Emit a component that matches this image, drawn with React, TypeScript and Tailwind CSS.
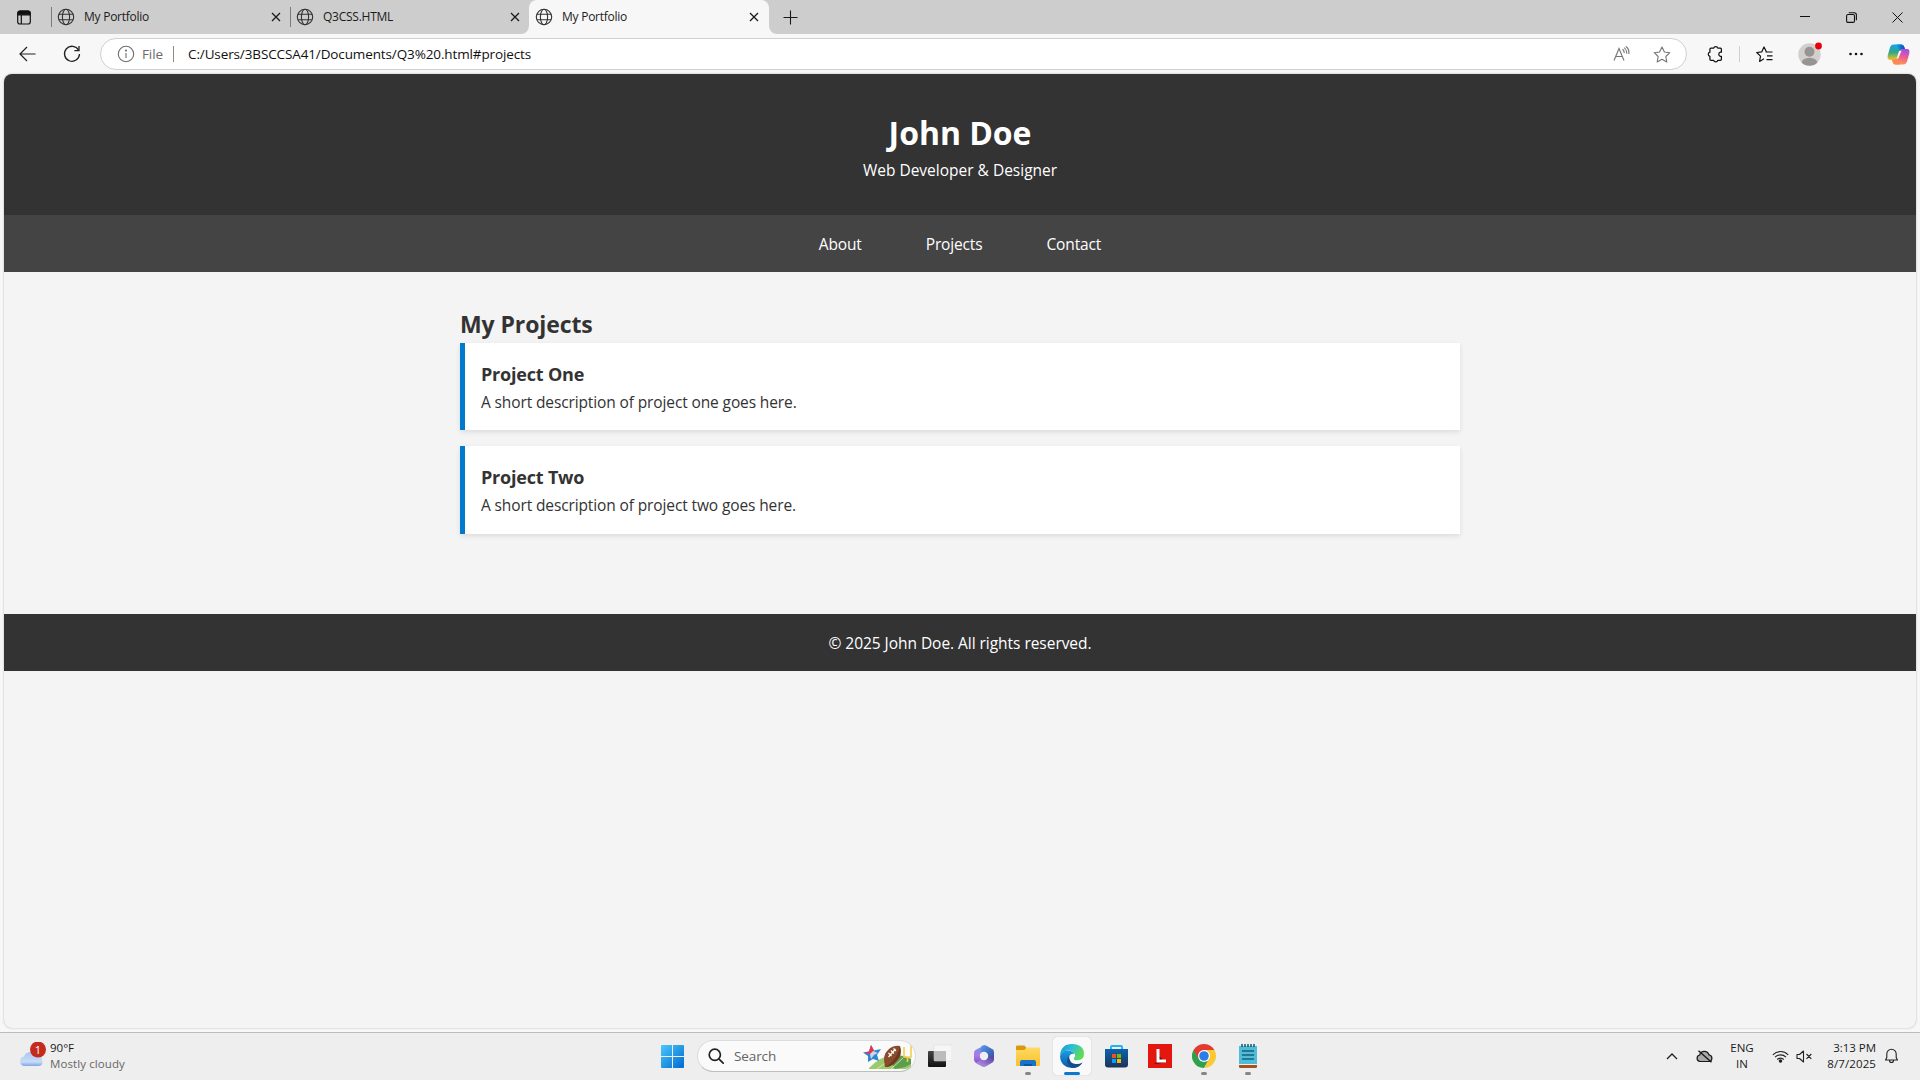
import type { ReactNode } from "react";

function Globe() {
  return (
    <svg width="18" height="18" viewBox="0 0 18 18" fill="none" stroke="#333" strokeWidth="1.1">
      <circle cx="9" cy="9" r="7.7" />
      <ellipse cx="9" cy="9" rx="3.6" ry="7.7" />
      <path d="M2 6.2h14M2 11.8h14" />
    </svg>
  );
}

function Cross() {
  return (
    <svg width="10" height="10" viewBox="0 0 10 10" fill="none" stroke="#1a1a1a" strokeWidth="1.3">
      <path d="M1 1l8 8M9 1l-8 8" />
    </svg>
  );
}

function Tab({ title }: { title: string }) {
  return (
    <>
      <Globe />
      <span className="ml-[9px] flex-1 whitespace-nowrap text-[12px] leading-[16px] tracking-[-0.25px] text-[#1b1b1b]">{title}</span>
      <Cross />
    </>
  );
}

function TabBar() {
  return (
    <div className="flex h-[34px] bg-[#cdcdcd]">
      <div className="flex w-[51px] items-center pl-[17px]">
        <svg width="14" height="15" viewBox="0 0 14 15" fill="none" stroke="#111" strokeWidth="1.2">
          <rect x=".7" y="1" width="12.6" height="13" rx="2.2" />
          <path d="M1 3.2V3a2 2 0 012-2h8a2 2 0 012 2v1.8H1z" fill="#111" />
          <path d="M4.3 5v9" />
        </svg>
      </div>
      <div className="flex w-[239px] items-center pr-[9px]">
        <div className="mr-[5px] h-[20px] w-px bg-[#7c7c7c]" />
        <Tab title="My Portfolio" />
      </div>
      <div className="flex w-[239px] items-center pr-[9px]">
        <div className="mr-[5px] h-[20px] w-px bg-[#7c7c7c]" />
        <Tab title="Q3CSS.HTML" />
      </div>
      <div className="relative flex w-[240px] items-center rounded-t-[8px] bg-[#f7f7f7] pl-[6px] pr-[10px]">
        <svg className="absolute -left-[8px] bottom-0" width="8" height="8"><path d="M8 0v8H0a8 8 0 008-8z" fill="#f7f7f7" /></svg>
        <svg className="absolute -right-[8px] bottom-0" width="8" height="8"><path d="M0 0v8h8a8 8 0 01-8-8z" fill="#f7f7f7" /></svg>
        <Tab title="My Portfolio" />
      </div>
      <div className="flex items-center pl-[14px]">
        <svg width="15" height="15" viewBox="0 0 15 15" stroke="#1a1a1a" strokeWidth="1.1"><path d="M7.5 .5v14M.5 7.5h14" /></svg>
      </div>
      <div className="ml-auto flex items-center">
        <div className="flex w-[46px] justify-center">
          <svg width="10" height="10" stroke="#111" strokeWidth="1"><path d="M0 4.5h10" /></svg>
        </div>
        <div className="flex w-[46px] justify-center">
          <svg width="11" height="11" viewBox="0 0 11 11" fill="none" stroke="#111" strokeWidth="1.1">
            <rect x=".6" y="2.5" width="7.9" height="7.9" rx="1.4" />
            <path d="M2.8.7h5.4a2.2 2.2 0 012.2 2.2v5.4" />
          </svg>
        </div>
        <div className="flex w-[46px] justify-center">
          <svg width="11" height="11" viewBox="0 0 11 11" stroke="#111" strokeWidth="1"><path d="M.5.5l10 10M10.5.5l-10 10" /></svg>
        </div>
      </div>
    </div>
  );
}

function Slot({ w, children }: { w: string; children: ReactNode }) {
  return <div className={`flex shrink-0 items-center justify-center ${w}`}>{children}</div>;
}

function Toolbar() {
  return (
    <div className="flex h-[40px] items-center bg-[#f7f7f7]">
      <div className="flex w-[100px] items-center pl-[19px]">
        <svg width="17" height="16" viewBox="0 0 17 16" fill="none" stroke="#222" strokeWidth="1.2"><path d="M16.5 8H1.2M8 1L1 8l7 7" /></svg>
        <svg className="ml-[27px]" width="18" height="18" viewBox="0 0 18 18" fill="none" stroke="#222" strokeWidth="1.3">
          <path d="M15.6 5.2A7.5 7.5 0 1016.5 9" />
          <path d="M16 1v4.6h-4.6" />
        </svg>
      </div>
      <div className="flex h-[32px] w-[1587px] items-center rounded-full border border-[#d0d0d0] bg-white pl-[16px]">
        <svg width="18" height="18" viewBox="0 0 18 18" fill="none" stroke="#6f6f6f" strokeWidth="1.1">
          <circle cx="9" cy="9" r="7.7" />
          <path d="M9 8v5" />
          <circle cx="9" cy="5.6" r=".5" fill="#6f6f6f" />
        </svg>
        <span className="ml-[7px] w-[31px] text-[13.5px] leading-[18px] tracking-[-0.1px] text-[#6b6b6b]">File</span>
        <div className="h-[16px] w-px bg-[#8a8a8a]" />
        <span className="ml-[14px] flex-1 whitespace-nowrap text-[13.5px] leading-[18px] tracking-[-0.12px] text-[#111]">
          C:/Users/3BSCCSA41/Documents/Q3%20.html#projects
        </span>
        <svg width="17" height="16" viewBox="0 0 17 16" fill="none" stroke="#757575" strokeWidth="1.1">
          <path d="M1 14.5L6 2.500l5 12M2.800 10.500h6.400M9.500 3.200q2 1.400 1.600 4M11 1.600q3.200 2 2.600 6M12.800.400q3.800 2.600 3 7.600" />
        </svg>
        <svg className="ml-[23px] mr-[15px]" width="18" height="17" viewBox="0 0 18 17" fill="none" stroke="#757575" strokeWidth="1.1" strokeLinejoin="round">
          <path d="M9 1l2.400 5 5.400.7-4 3.800 1 5.500L9 13.300 4.200 16l1-5.500-4-3.800L6.600 6z" />
        </svg>
      </div>
      <Slot w="w-[56px]">
        <svg width="17" height="18" viewBox="0 0 17 18" fill="none" stroke="#111" strokeWidth="1.25" strokeLinejoin="round">
          <path d="M3.900 3.200h2.800a2.100 2.100 0 014.100 0h2.600q1 0 1 1v3h-1a2.100 2.100 0 000 4.100h1v3q0 1-1 1h-2.600a2.100 2.100 0 01-4.100 0H3.900q-1 0-1-1v-3a2.100 2.100 0 010-4.100v-3q0-1 1-1z" />
        </svg>
      </Slot>
      <div className="ml-[-4px] h-[16px] w-px bg-[#cfcfcf]" />
      <Slot w="w-[48px]">
        <svg width="17" height="17" viewBox="0 0 17 17" fill="none" stroke="#111" strokeWidth="1.2" strokeLinejoin="round">
          <path d="M10.500 6L8 1 5.800 5.800.700 6.500l3.800 3.600-.9 5.300L8 12.800M9.500 6h7M11 9.800h5.500M10.500 13.600h6" />
        </svg>
      </Slot>
      <Slot w="w-[43px]">
        <svg className="mt-[-1px]" width="24" height="24" viewBox="0 0 24 24">
          <clipPath id="av"><circle cx="11.500" cy="12.500" r="11.200" /></clipPath>
          <circle cx="11.500" cy="12.500" r="11.200" fill="#d2d0ce" />
          <circle cx="11.500" cy="9.700" r="5" fill="#979593" />
          <ellipse cx="11.500" cy="21" rx="8" ry="5.200" fill="#979593" clipPath="url(#av)" />
          <circle cx="20.500" cy="4" r="3.400" fill="#e8000b" />
        </svg>
      </Slot>
      <Slot w="w-[50px]">
        <svg width="14" height="4" viewBox="0 0 14 4" fill="#111"><circle cx="1.500" cy="2" r="1.300" /><circle cx="7" cy="2" r="1.300" /><circle cx="12.500" cy="2" r="1.300" /></svg>
      </Slot>
      <Slot w="w-[34px]"><Copilot /></Slot>
    </div>
  );
}

function Copilot() {
  return (
    <svg width="23" height="21" viewBox="0 0 23 21">
      <defs>
        <linearGradient id="cpa" x1="0" y1="0" x2="0" y2="1"><stop offset="0" stopColor="#16a5e8" /><stop offset=".5" stopColor="#2fa58c" /><stop offset="1" stopColor="#f5c61d" /></linearGradient>
        <linearGradient id="cpb" x1=".6" y1="0" x2=".4" y2="1"><stop offset="0" stopColor="#a34ee8" /><stop offset=".5" stopColor="#ee5e8d" /><stop offset="1" stopColor="#ff9a55" /></linearGradient>
        <linearGradient id="cpc" x1="0" y1="0" x2="1" y2="0"><stop offset="0" stopColor="#0ba0e8" /><stop offset="1" stopColor="#1347b8" /></linearGradient>
      </defs>
      <path d="M6.500.500h8q2 0 2.800 2.600l.8 2.400h-3q-2 0-2.700 2.500L10.600 14q-.7 1.900-2.600 1.900H3Q0 15.900.700 11.500L3 3.500Q4 .500 6.500.500z" fill="url(#cpa)" />
      <path d="M16.500 20.500h-8q-2 0-2.800-2.600L5 15.500h3q2 0 2.700-2.500l1.700-6q.7-1.900 2.600-1.900h5q3 0 2.300 4.400l-2.300 8q-1 3-3.500 3z" fill="url(#cpb)" />
      <path d="M9.500.500h5q2 0 2.800 2.600l.7 2h-3q-2 0-2.800 2.400Q12 3 9.500.500z" fill="url(#cpc)" />
      <path d="M13.500 20.500h-5q-2 0-2.800-2.600l-.7-2h3q2 0 2.800-2.400Q11 18 13.500 20.500z" fill="#fb8a4c" />
      <path d="M12.300 6.800h2.200L11.300 14.500H9.100q.9-.5 1.300-1.900l1.100-4z" fill="#f7f7f7" />
    </svg>
  );
}

function Project({ title, text, height }: { title: string; text: string; height: string }) {
  return (
    <article className={`border-l-[5px] border-[#007acc] bg-white px-4 pt-[17px] shadow-[0_2px_5px_rgba(0,0,0,0.1)] ${height}`}>
      <h3 className="text-[18px] font-bold leading-[28px] tracking-[-0.2px]">{title}</h3>
      <p className="text-[15.5px] leading-[28px] tracking-[-0.12px]">{text}</p>
    </article>
  );
}

function Page() {
  return (
    <div className="mx-[4px] h-[954px] overflow-hidden rounded-[8px] bg-[#f4f4f4] text-[#333] shadow-[0_0_2px_rgba(0,0,0,0.3)]">
      <header className="h-[141px] bg-[#333] pt-[34px] text-center text-white">
        <h1 className="text-[32px] font-bold leading-[50px] tracking-[-0.05px]">John Doe</h1>
        <p className="text-[15.5px] leading-[25px]">Web Developer &amp; Designer</p>
      </header>
      <nav className="flex h-[57px] items-center justify-center gap-[64px] bg-[#444] pt-[2px] text-[15.5px] leading-[25px] tracking-[-0.15px] text-white">
        <span>About</span>
        <span>Projects</span>
        <span>Contact</span>
      </nav>
      <main className="mx-auto h-[342px] w-[1000px] pt-[33px]">
        <h2 className="text-[23px] font-bold leading-[38px] tracking-[-0.1px]">My Projects</h2>
        <div className="flex flex-col gap-4">
          <Project title="Project One" text="A short description of project one goes here." height="h-[87px]" />
          <Project title="Project Two" text="A short description of project two goes here." height="h-[88px]" />
        </div>
      </main>
      <footer className="flex h-[57px] items-center justify-center bg-[#333] pt-[2px] text-[15.5px] tracking-[-0.04px] text-white">
        © 2025 John Doe. All rights reserved.
      </footer>
    </div>
  );
}

function TaskIcon({ children, active, dot }: { children: ReactNode; active?: boolean; dot?: boolean }) {
  return (
    <div className={`relative mx-[3px] flex h-[38px] w-[38px] items-center justify-center rounded-[4px] ${active ? "bg-[#f9f9f9] shadow-[0_0_1px_rgba(0,0,0,0.3)]" : ""}`}>
      {children}
      {active && <div className="absolute bottom-0 h-[3px] w-[16px] rounded-full bg-[#0a78d4]" />}
      {dot && <div className="absolute bottom-0 h-[3px] w-[6px] rounded-full bg-[#868686]" />}
    </div>
  );
}

function SearchArt() {
  return (
    <svg width="50" height="28" viewBox="0 0 50 28">
      <path d="M6 26q12-12 24-13 12 0 18 4v7q-2 3-6 3H6z" fill="#9cc96a" />
      <path d="M24 14q10-3 24 3v5l-6 3-10 2z" fill="#5d9d4c" />
      <path d="M14 27l18-13M28 27l12-11" stroke="#dfeecb" strokeWidth=".8" />
      <path d="M8 3l3 5.500 7-1.500-4 6 2 6-6-2-5 3v-6L0 10.500l6-1z" fill="#2f86cf" />
      <path d="M8 3l3 5.500-1 4-9-2 5-1z" fill="#e8344a" />
      <path d="M10 9l5 2-4 2-3 4-1-5z" fill="#c9d6ea" />
      <path d="M22 25Q19 13 25 8q5-5 12-4 3 9-3 15-5 6-12 6z" fill="#8a4a2c" />
      <path d="M22 25q4-1 8-6 5-6 7-14 2 8-4 14-5 6-11 6z" fill="#6d3420" />
      <path d="M25.500 15l7-8M25.500 11l3 3M28 8.500l3 3M30.500 6.500l2.500 2.500" stroke="#fff" strokeWidth="1.200" />
      <path d="M41 5v10h7V4M44.500 15v5" fill="none" stroke="#f3cf4f" strokeWidth="1.600" />
    </svg>
  );
}

function Taskbar() {
  return (
    <div className="flex h-[48px] items-center border-t border-[#bcbcbc] bg-[#eee] pb-px">
      <div className="flex w-[650px] items-center pl-[18px]">
        <svg width="28" height="28" viewBox="0 0 28 28">
          <defs><linearGradient id="cl" x1="0" y1="0" x2="0" y2="1"><stop offset="0" stopColor="#a9c6f2" /><stop offset=".7" stopColor="#c8dcf8" /><stop offset="1" stopColor="#7ea6e6" /></linearGradient></defs>
          <circle cx="19" cy="13" r="5" fill="#f58a1f" />
          <path d="M5.500 24a5 5 0 01.6-9.600 6.500 6.500 0 0112-.8 5 5 0 015.900 3.200q2 7-3.500 7.200z" fill="url(#cl)" />
          <circle cx="20" cy="7.500" r="8" fill="#c42b1c" clipPath="none" />
          <text x="20" y="11.500" fontSize="11" textAnchor="middle" fill="#fff">1</text>
        </svg>
        <div className="ml-[4px] text-[11.500px] leading-[16px]">
          <div className="text-[#1b1b1b]">90°F</div>
          <div className="tracking-[0.1px] text-[#666]">Mostly cloudy</div>
        </div>
      </div>
      <TaskIcon>
        <svg width="23" height="23" viewBox="0 0 23 23">
          <defs><linearGradient id="wn" x1="0" y1="0" x2="1" y2="1"><stop offset="0" stopColor="#4cc8fb" /><stop offset="1" stopColor="#0069d0" /></linearGradient></defs>
          <path d="M1 0h10v11H0V1q0-1 1-1zM12 0h10q1 0 1 1v10H12zM0 12h11v11H1q-1 0-1-1zM12 12h11v10q0 1-1 1H12z" fill="url(#wn)" />
        </svg>
      </TaskIcon>
      <div className="ml-[3px] mr-[2px] flex h-[32px] w-[219px] items-center rounded-full border border-[#dcdcdc] border-b-[#bdbdbd] bg-[#fafafa] pl-[10px]">
        <svg width="16" height="16" viewBox="0 0 16 16" fill="none" stroke="#222" strokeWidth="1.700"><circle cx="6.800" cy="6.800" r="5.600" /><path d="M10.800 10.800l4.400 4.400" strokeLinecap="round" /></svg>
        <span className="ml-[10px] flex-1 text-[13.500px] leading-[18px] tracking-[-0.1px] text-[#646464]">Search</span>
        <span className="mr-[2px]"><SearchArt /></span>
      </div>
      <TaskIcon>
        <svg width="24" height="24" viewBox="0 0 24 24">
          <defs><linearGradient id="tv" x1="0" y1="0" x2="0" y2="1"><stop offset="0" stopColor="#444" /><stop offset="1" stopColor="#111" /></linearGradient></defs>
          <rect x="0" y="7" width="18" height="16" rx="1" fill="url(#tv)" />
          <rect x="6" y="1" width="18" height="16" rx="1" fill="#f6f6f6" stroke="#d8d8d8" strokeWidth=".5" />
          <rect x="6" y="7" width="12" height="10" fill="#bcbcbc" />
        </svg>
      </TaskIcon>
      <TaskIcon>
        <svg width="22" height="24" viewBox="0 0 22 24">
          <defs>
            <linearGradient id="m1" x1="0" y1="0" x2="0" y2="1"><stop offset="0" stopColor="#5b9be8" /><stop offset=".5" stopColor="#b179e8" /><stop offset="1" stopColor="#6d4bc4" /></linearGradient>
            <linearGradient id="m2" x1="0" y1="0" x2="1" y2="1"><stop offset="0" stopColor="#4f9bea" /><stop offset="1" stopColor="#3c4a9c" /></linearGradient>
            <linearGradient id="m3" x1="1" y1="0" x2="0" y2="1"><stop offset="0" stopColor="#4a3c9c" /><stop offset="1" stopColor="#c69af5" /></linearGradient>
          </defs>
          <path d="M12 1L2.500 6Q1 7 1 9v6.500q0 2 1.500 3l5 3L9 12l6-5z" fill="url(#m1)" />
          <path d="M8.500 2Q11 .500 13.500 1.800l6 3.500Q21 6.300 21 8.500v7.200l-6.500-3.200L8 7.500z" fill="url(#m2)" />
          <path d="M21 14v1.500q0 2-1.500 3l-6 3.600q-2.500 1.600-5 .2L3 19l4.500-3.500 6-.5 2-3z" fill="url(#m3)" />
          <circle cx="11" cy="12" r="4.200" fill="#f0f0f4" />
        </svg>
      </TaskIcon>
      <TaskIcon dot>
        <svg width="24" height="22" viewBox="0 0 24 22">
          <defs><linearGradient id="fo" x1="0" y1="0" x2="0" y2="1"><stop offset="0" stopColor="#ffda63" /><stop offset="1" stopColor="#fbbf2c" /></linearGradient></defs>
          <path d="M0 1.500Q0 .500 1 .500h7.500l2 2.500v4H0z" fill="#d9980f" />
          <path d="M0 5h8.500l2-2.500H23q1 0 1 1V20q0 1-1 1H1q-1 0-1-1z" fill="url(#fo)" />
          <path d="M4 21v-4q0-2 2-2h12q2 0 2 2v4z" fill="#1374c9" /><path d="M8 21v-2h8v2z" fill="#0a569e" />
        </svg>
      </TaskIcon>
      <TaskIcon active>
        <svg width="24" height="24" viewBox="0 0 24 24">
          <defs>
            <linearGradient id="e1" x1="0" y1="0" x2="1" y2=".4"><stop offset="0" stopColor="#1b8fd8" /><stop offset=".5" stopColor="#2bc0d6" /><stop offset="1" stopColor="#5fdc56" /></linearGradient>
            <linearGradient id="e2" x1="0" y1="0" x2="0" y2="1"><stop offset="0" stopColor="#1c9be0" /><stop offset="1" stopColor="#0c59a4" /></linearGradient>
          </defs>
          <path d="M0 11.500Q1 0 12.200 0 24 .500 24 10q-.2 6-6.500 6.300-4.500 0-3.500-2.300 2-2 .5-4.500Q12 6 7 6.500 2 7.500 0 11.500z" fill="url(#e1)" />
          <path d="M0 12Q2 6.500 7.500 6.500q5.500.3 6.800 3.500-4.300-1-5.300 3.500-.3 7 6.500 7.500 4 0 7-2.500-3.500 5.500-10.500 5.500Q.500 23 0 12z" fill="url(#e2)" />
          <path d="M9 12Q5 17 9 21.500q2 2.200 5 2.300 5.500-.6 8.300-5-3 1.700-6.800 1.200Q9 19 9 12z" fill="#154c8c" />
        </svg>
      </TaskIcon>
      <TaskIcon>
        <svg width="23" height="24" viewBox="0 0 23 24">
          <defs><linearGradient id="st" x1="0" y1="0" x2="0" y2="1"><stop offset="0" stopColor="#0c63ae" /><stop offset="1" stopColor="#1d3257" /></linearGradient></defs>
          <path d="M6 6V2.800Q6 2 7 2h9q1 0 1 .8V6" fill="none" stroke="#22b4ee" strokeWidth="1.900" />
          <path d="M0 5h23v15.500q0 3-3 3H3q-3 0-3-3z" fill="url(#st)" />
          <path d="M7 10h4v4H7z" fill="#f25022" /><path d="M12 10h4v4h-4z" fill="#7fba00" /><path d="M7 15h4v4H7z" fill="#00a4ef" /><path d="M12 15h4v4h-4z" fill="#ffb900" />
        </svg>
      </TaskIcon>
      <TaskIcon>
        <svg width="24" height="24" viewBox="0 0 24 24">
          <path d="M0 0h24v24H0z" fill="#e3170f" />
          <path d="M8.500 10v8.500L6 20l12-1.500z" fill="#5a0a08" />
          <path d="M8.500 5h3v10.500H18v3H8.500z" fill="#fff" />
        </svg>
      </TaskIcon>
      <TaskIcon dot>
        <svg width="24" height="24" viewBox="0 0 24 24">
          <path d="M12 12L1.600 6A12 12 0 0122.400 6z" fill="#e33b2e" />
          <path d="M12 12L1.600 6A12 12 0 0012 24l5.200-9z" fill="#2da14c" />
          <path d="M12 6h10.400A12 12 0 0112 24l5.200-9z" fill="#fcc934" />
          <path d="M1.600 6L6.800 15 12 6z" fill="#e33b2e" />
          <circle cx="12" cy="12" r="6" fill="#fff" /><circle cx="12" cy="12" r="4.800" fill="#2a7de9" />
        </svg>
      </TaskIcon>
      <TaskIcon dot>
        <svg width="18" height="24" viewBox="0 0 18 24">
          <path d="M0 2h18v18H0z" fill="#4fbcd8" />
          <path d="M0 20h18v1H0z" fill="#eef" /><path d="M0 21h18v1.500q0 1.500-1.500 1.500h-15Q0 24 0 22.500z" fill="#a5531a" />
          <path d="M3 0v3M6 0v3M9 0v3M12 0v3M15 0v3" stroke="#14566e" strokeWidth="1.500" />
          <path d="M3 7h12M3 11h12M3 15h12" stroke="#14607a" strokeWidth="1.600" />
        </svg>
      </TaskIcon>
      <div className="ml-auto flex items-center text-[11.500px] leading-[16px] text-[#1b1b1b]">
        <svg width="12" height="7" viewBox="0 0 12 7" fill="none" stroke="#222" strokeWidth="1.300"><path d="M1 6l5-5 5 5" /></svg>
        <svg className="ml-[18px]" width="17" height="13" viewBox="0 0 17 13" fill="#aaa" stroke="#1a1a1a" strokeWidth="1.200">
          <path d="M4 11.500a3.300 3.300 0 01-.3-6.500 4.800 4.800 0 019.200-.2 3.400 3.400 0 01.3 6.700z" /><path d="M2.500.800l13 11.500" strokeWidth="1.400" />
        </svg>
        <div className="ml-[17px] w-[24px] text-center"><div>ENG</div><div>IN</div></div>
        <svg className="ml-[18px]" width="17" height="13" viewBox="0 0 17 13" fill="none" stroke="#222" strokeWidth="1.100">
          <path d="M.800 4.800a10.800 10.800 0 0115.400 0M3 7.200a7.700 7.700 0 0111 0M5.200 9.500a4.600 4.600 0 016.600 0" /><circle cx="8.500" cy="11" r="1.200" fill="#222" />
        </svg>
        <svg className="ml-[7px]" width="17" height="13" viewBox="0 0 17 13" fill="none" stroke="#222" strokeWidth="1.100">
          <path d="M1 4.500h2.500L7.500 1v11L3.500 8.500H1zM10.500 4l4.800 4.800M15.300 4l-4.800 4.800" strokeLinejoin="round" />
        </svg>
        <div className="ml-[12px] w-[51px] whitespace-nowrap text-right"><div className="tracking-[-0.05px]">3:13 PM</div><div className="tracking-[0.1px]">8/7/2025</div></div>
        <svg className="ml-[8px] mr-[21px]" width="15" height="16" viewBox="0 0 15 16" fill="none" stroke="#222" strokeWidth="1.100" strokeLinejoin="round">
          <path d="M1.500 12l1.300-2.500V6a4.700 4.700 0 019.400 0v3.500l1.300 2.500zM5.500 12.500a2 2 0 004 0" />
        </svg>
      </div>
    </div>
  );
}

export default function App() {
  return (
    <div className="h-[1080px] w-[1920px] overflow-hidden bg-[#f7f7f7] font-['Open_Sans','Noto_Sans',sans-serif]">
      <TabBar />
      <Toolbar />
      <Page />
      <div className="h-[4px]" />
      <Taskbar />
    </div>
  );
}
